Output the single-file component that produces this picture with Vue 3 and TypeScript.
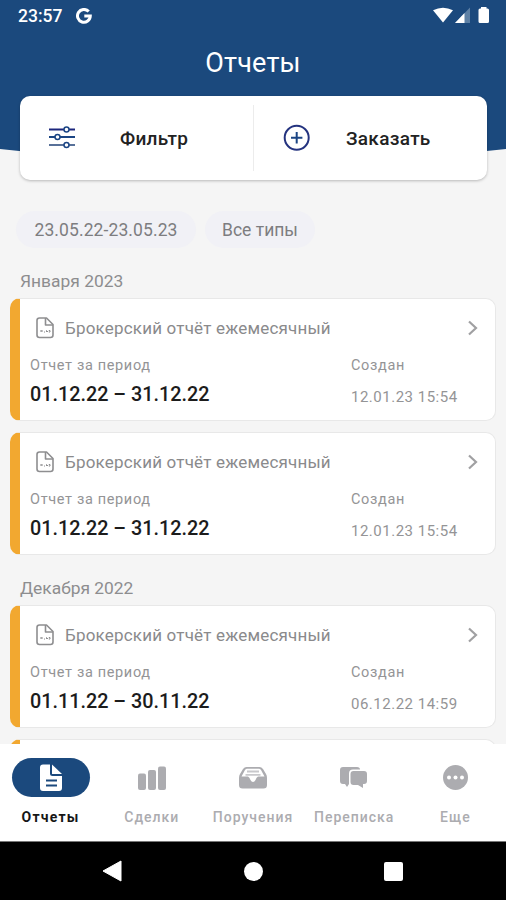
<script setup lang="ts">
interface Report {
  id: number
  period: string
  created: string
}

interface ReportGroup {
  month: string
  reports: Report[]
}

interface Tab {
  id: string
  label: string
}

const groups: ReportGroup[] = [
  {
    month: 'Января 2023',
    reports: [
      { id: 1, period: '01.12.22 – 31.12.22', created: '12.01.23 15:54' },
      { id: 2, period: '01.12.22 – 31.12.22', created: '12.01.23 15:54' },
    ],
  },
  {
    month: 'Декабря 2022',
    reports: [{ id: 3, period: '01.11.22 – 30.11.22', created: '06.12.22 14:59' }],
  },
]

const tabs: Tab[] = [
  { id: 'reports', label: 'Отчеты' },
  { id: 'deals', label: 'Сделки' },
  { id: 'orders', label: 'Поручения' },
  { id: 'chat', label: 'Переписка' },
  { id: 'more', label: 'Еще' },
]
const activeTab = 'reports'
</script>

<template>
  <div class="screen">
    <svg class="backdrop" viewBox="0 0 506 170" aria-hidden="true">
      <path d="M0 0H506V149Q253 179 0 149Z" fill="#1b497d" />
    </svg>

    <header class="status">
      <div class="status-left">
        <span class="clock">23:57</span>
        <svg width="16" height="16" viewBox="0 0 16 16" fill="none" stroke="#fff" stroke-width="3">
          <path d="M12.7 3.6A6.4 6.4 0 1 0 14.3 8H8.3" />
        </svg>
      </div>
      <svg class="status-icons" width="58" height="18" viewBox="0 0 58 18">
        <path d="M0 3.300Q10 -2 20 3.300L10 15.500Z" fill="#fff" />
        <path d="M37 0.500V16H22Z" fill="#5d80a5" />
        <path d="M31.500 6V16H22Z" fill="#fff" />
        <path d="M48 1.500V0H53.500V1.500H54.500Q56 1.500 56 3V14.500Q56 16 54.500 16H47Q45.500 16 45.500 14.500V3Q45.500 1.500 47 1.500Z" fill="#fff" />
      </svg>
    </header>
    <h1 class="title">Отчеты</h1>

    <section class="actions">
      <button class="action">
        <svg class="filter-icon" width="26" height="24" viewBox="0 0 26 24" fill="none" stroke="#1b4584">
          <path d="M0 3.500H26" stroke="#1c277d" stroke-width="2" />
          <path d="M0 11H26" stroke-width="2" />
          <path d="M0 19H26" stroke="#587199" stroke-width="2" />
          <g fill="#fff" stroke-width="1.500">
            <circle cx="17.500" cy="3.500" r="2.500" />
            <circle cx="8.500" cy="11" r="2.500" />
            <circle cx="17.500" cy="19" r="2.500" />
          </g>
        </svg>
        <span class="filter-label">Фильтр</span>
      </button>
      <i class="divider"></i>
      <button class="action">
        <svg class="add-icon" width="28" height="28" viewBox="0 0 28 28" fill="none" stroke="#24337f" stroke-width="2">
          <circle cx="13.700" cy="13.800" r="12" />
          <path d="M13.700 8.100V19.500M8 13.800H19.400" stroke="#1b4584" />
        </svg>
        <span class="add-label">Заказать</span>
      </button>
    </section>

    <main class="content">
      <div class="chips">
        <span class="chip chip-date">23.05.22-23.05.23</span>
        <span class="chip chip-type">Все типы</span>
      </div>

      <section v-for="group in groups" :key="group.month" class="group">
        <h2 class="month">{{ group.month }}</h2>
        <article v-for="report in group.reports" :key="report.id" class="card">
          <div class="card-head">
            <svg width="18" height="22" viewBox="0 0 18 22" fill="none" stroke="#8e8e90" stroke-width="1.600" stroke-linejoin="round">
              <path d="M3.500 1H10.500L17 7.500V18Q17 20.500 14.500 20.500H3.500Q1 20.500 1 18V3.500Q1 1 3.500 1Z" />
              <path d="M9.500 1V8H17" />
              <path d="M4.500 13L6.500 15M4.500 15L6.500 13M8 15H9M10.500 15V13.500L12 15M12.800 13.500H14V15H12.800" stroke-width="1" />
            </svg>
            <h3>Брокерский отчёт ежемесячный</h3>
            <svg class="chevron" width="11" height="16" viewBox="0 0 11 16" fill="none" stroke="#a0a0a2" stroke-width="2.200">
              <path d="M1 1.500L8 8L1 14.500" />
            </svg>
          </div>
          <div class="card-body">
            <div class="period">
              <span class="caption">Отчет за период</span>
              <strong>{{ report.period }}</strong>
            </div>
            <div class="created">
              <span class="caption">Создан</span>
              <time>{{ report.created }}</time>
            </div>
          </div>
        </article>
      </section>
      <div class="card card-peek"></div>
    </main>

    <nav class="tabs">
      <a v-for="tab in tabs" :key="tab.id" class="tab" :class="[tab.id, { active: tab.id === activeTab }]">
        <span class="tab-icon">
          <svg v-if="tab.id === 'reports'" width="24" height="28" viewBox="0 0 24 28">
            <path d="M4 0.500H11V9.500Q11 12 13.500 12H23V24Q23 27 20 27H4Q1 27 1 24V3.500Q1 0.500 4 0.500Z" fill="#fff" />
            <path d="M13 0.500L23 10H13Z" fill="#fff" />
            <path d="M7 16.500H18M7 21.500H18" stroke="#1b497d" stroke-width="1.800" />
          </svg>
          <svg v-else-if="tab.id === 'deals'" width="28" height="26" viewBox="0 0 28 26" fill="currentColor">
            <rect y="8.500" width="8" height="16.500" rx="2" />
            <rect x="10" y="5" width="8" height="20" rx="2" />
            <rect x="20" y="1.500" width="8" height="23.500" rx="2" />
          </svg>
          <svg v-else-if="tab.id === 'orders'" width="30" height="26" viewBox="0 0 30 26">
            <path d="M8.500 2H21.500Q23.500 2 25 4L28 9Q29 10.500 29 13V20Q29 23.500 25.500 23.500H4.500Q1 23.500 1 20V13Q1 10.500 2 9L5 4Q6.500 2 8.500 2Z" fill="currentColor" />
            <path d="M9 3.800H21Q22 3.800 23 5L26.500 11.500H20Q18.500 12 17.500 15Q16.500 17 15 17Q13.500 17 12.500 15Q11.500 12 10 11.500H3.500L7 5Q8 3.800 9 3.800Z" fill="#fff" />
            <path d="M9 6.500H21M7.500 9.800H22.500" stroke="#c8c8cb" stroke-width="1.800" />
          </svg>
          <svg v-else-if="tab.id === 'chat'" width="30" height="26" viewBox="0 0 30 26" fill="currentColor">
            <path d="M4 2H18Q21 2 21 4.500H14Q10 4.500 10 8.500V19L8 22L6 19H4Q1 19 1 16V5Q1 2 4 2Z" />
            <path d="M14.500 6H25Q28 6 28 9V16Q28 19 25 19H24V23L19 20H14.500Q11.500 20 11.500 17V9Q11.500 6 14.500 6Z" />
          </svg>
          <svg v-else width="26" height="26" viewBox="0 0 26 26">
            <circle cx="13.500" cy="12.500" r="12.500" fill="currentColor" />
            <g fill="#fff"><circle cx="7" cy="12.500" r="2" /><circle cx="13.500" cy="12.500" r="2" /><circle cx="20" cy="12.500" r="2" /></g>
          </svg>
        </span>
        <span class="tab-label">{{ tab.label }}</span>
      </a>
    </nav>

    <footer class="system-nav">
      <svg width="20" height="22" viewBox="0 0 20 22"><path d="M19 1V21L1 11Z" fill="#fff" stroke="#fff" stroke-linejoin="round" /></svg>
      <i class="home"></i>
      <i class="recent"></i>
    </footer>
  </div>
</template>

<style>
body {
  margin: 0;
}
</style>

<style scoped>
.screen {
  position: relative;
  display: flex;
  flex-direction: column;
  width: 506px;
  height: 900px;
  overflow: hidden;
  background: #f5f5f5;
  font-family: Roboto, 'Liberation Sans', sans-serif;
}
.backdrop {
  position: absolute;
  top: 0;
  left: 0;
  width: 506px;
  height: 170px;
}
.status,
.title,
.actions {
  position: relative;
}
.status {
  display: flex;
  justify-content: space-between;
  align-items: center;
  height: 32px;
  padding: 0 15px 0 18px;
  color: #fff;
  flex: none;
}
.status-left {
  display: flex;
  align-items: center;
  gap: 14px;
}
.clock {
  font-size: 17.5px;
  font-weight: 500;
  line-height: 32px;
}
.title {
  flex: none;
  height: 64px;
  margin: 0;
  color: #fff;
  font-size: 27px;
  font-weight: 400;
  line-height: 62px;
  text-align: center;
  letter-spacing: 0.2px;
}
.actions {
  display: flex;
  align-items: center;
  flex: none;
  width: 467px;
  height: 84px;
  margin-left: 20px;
  border-radius: 10px;
  background: #fff;
  box-shadow: 0 1px 3px rgba(0, 0, 0, 0.25);
}
.action {
  display: flex;
  align-items: center;
  width: 233px;
  height: 84px;
  padding: 0 0 0 29px;
  border: 0;
  background: none;
  color: #222;
  font: 500 19px/24px Roboto, 'Liberation Sans', sans-serif;
  letter-spacing: 0.3px;
}
.action span {
  padding-top: 2px;
}
.divider {
  width: 1px;
  height: 66px;
  background: #ececec;
}
.filter-label {
  margin-left: 45px;
}
.add-label {
  margin-left: 35px;
}
.content {
  flex: none;
  height: 533px;
  padding: 31px 10px 0;
  overflow: hidden;
}
.chips {
  display: flex;
  gap: 9px;
  padding-left: 6px;
  margin-bottom: 12px;
}
.chip {
  height: 37px;
  box-sizing: border-box;
  border-radius: 19px;
  background: #f1f1f6;
  color: #7d7d80;
  font-size: 17.5px;
  line-height: 38px;
  text-align: center;
}
.chip-date {
  width: 180px;
  letter-spacing: 0.1px;
}
.chip-type {
  width: 110px;
}
.month {
  height: 39px;
  margin: 0;
  padding-left: 10px;
  color: #8d8d8f;
  font-size: 17.400px;
  font-weight: 400;
  line-height: 44px;
}
.group:first-of-type .month {
  height: 38px;
  line-height: 43px;
}
.card {
  box-sizing: border-box;
  width: 486px;
  height: 123px;
  margin-bottom: 11px;
  padding: 18px 0 0 10px;
  border: 1px solid #e8e8e8;
  border-left: 10px solid #f2a830;
  border-radius: 10px;
  background: #fff;
}
.card-head {
  display: flex;
  align-items: center;
  height: 22px;
  padding: 0 16px 0 6px;
}
.card-head h3 {
  margin: 0 0 0 11px;
  color: #8a8a8c;
  font-size: 17px;
  font-weight: 400;
  line-height: 22px;
  letter-spacing: 0.19px;
}
.chevron {
  margin-left: auto;
}
.card-body {
  display: flex;
  margin-top: 17px;
}
.period {
  width: 321px;
}
.caption,
.card-body strong,
.card-body time {
  display: block;
  white-space: nowrap;
}
.caption {
  color: #949496;
  font-size: 14.5px;
  line-height: 20px;
  letter-spacing: 0.65px;
}
.card-body strong {
  margin-top: 7px;
  color: #1c1c1c;
  font-size: 19.800px;
  font-weight: 500;
  line-height: 24px;
}
.card-body time {
  margin-top: 11px;
  color: #949496;
  font-size: 15px;
  line-height: 20px;
  letter-spacing: 0.5px;
}
.tabs {
  display: grid;
  grid-template-columns: repeat(5, 1fr);
  flex: none;
  height: 97px;
  border-bottom: 1px solid #777;
  background: #fff;
}
.tab {
  display: flex;
  flex-direction: column;
  align-items: center;
  padding-top: 14px;
  color: #acacb0;
}
.tab-icon {
  display: flex;
  justify-content: center;
  align-items: center;
  width: 78px;
  height: 39px;
  border-radius: 20px;
}
.tab-label {
  margin-top: 10px;
  font-size: 14px;
  font-weight: 500;
  line-height: 20px;
  letter-spacing: 1px;
}
.active .tab-icon {
  background: #1b497d;
}
.active .tab-label {
  color: #161616;
  font-weight: 700;
  letter-spacing: 1.2px;
}
.system-nav {
  display: flex;
  align-items: center;
  flex: 1;
  padding-left: 102px;
  background: #000;
}
.home {
  width: 19px;
  height: 19px;
  margin-left: 122px;
  border-radius: 50%;
  background: #fff;
}
.recent {
  width: 19px;
  height: 19px;
  margin-left: 121px;
  border-radius: 2px;
  background: #fff;
}
</style>
